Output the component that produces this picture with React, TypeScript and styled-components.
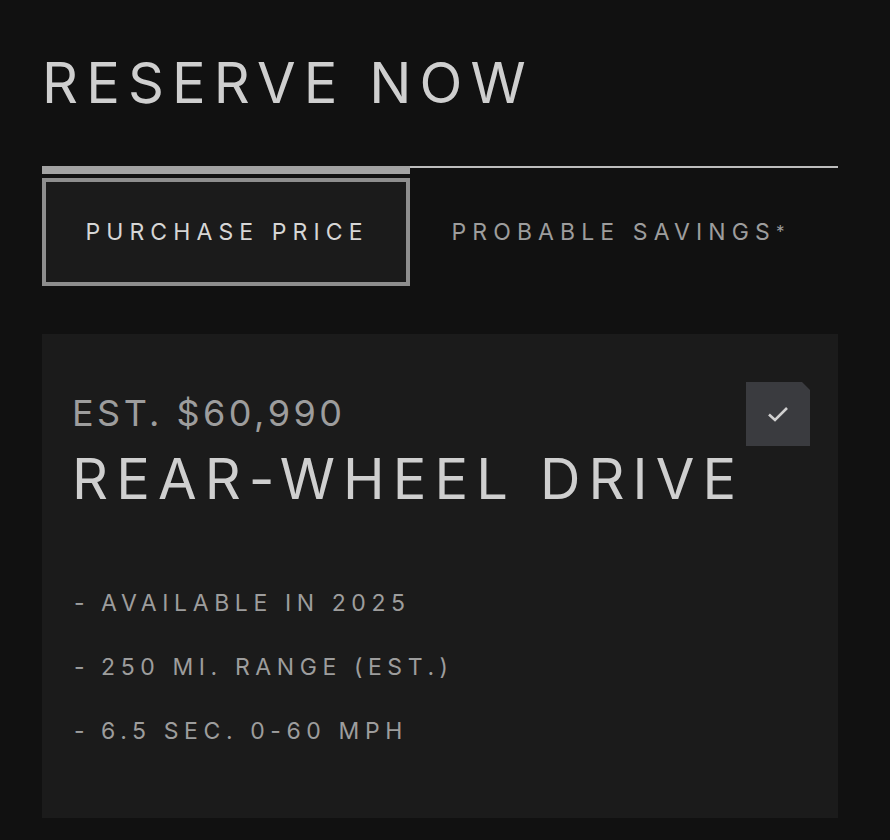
import React, { useState } from "react";
import styled, { createGlobalStyle } from "styled-components";

const GlobalStyle = createGlobalStyle`
  html, body {
    margin: 0;
    padding: 0;
    background: #111111;
  }
  body {
    font-family: Inter, "Liberation Sans", sans-serif;
    -webkit-font-smoothing: antialiased;
  }
`;

const Page = styled.div`
  width: 796px;
  padding: 55px 52px 40px 42px;
`;

const Title = styled.h1`
  margin: 0 0 55px 0;
  font-size: 56px;
  line-height: 56px;
  font-weight: 400;
  letter-spacing: 8.1px;
  color: #cfcfcf;
  white-space: nowrap;
`;

const TabsRow = styled.div`
  display: flex;
  align-items: flex-start;
`;

const Tab = styled.div<{ $grow?: boolean }>`
  display: flex;
  flex-direction: column;
  width: ${(p) => (p.$grow ? "auto" : "368px")};
  flex: ${(p) => (p.$grow ? "1" : "none")};
  cursor: pointer;
`;

const Indicator = styled.div<{ $active?: boolean }>`
  height: ${(p) => (p.$active ? "8px" : "2px")};
  background: ${(p) => (p.$active ? "#a3a3a3" : "#bdbdbd")};
`;

const TabBox = styled.div<{ $active?: boolean }>`
  margin-top: ${(p) => (p.$active ? "4px" : "10px")};
  height: 108px;
  box-sizing: border-box;
  border: 4px solid ${(p) => (p.$active ? "#8e8e8e" : "transparent")};
  background: ${(p) => (p.$active ? "#1b1b1b" : "transparent")};
  display: flex;
  align-items: center;
  justify-content: center;
  padding-left: ${(p) => (p.$active ? "2px" : "0")};
  padding-right: ${(p) => (p.$active ? "0" : "12px")};
  font-size: 23px;
  letter-spacing: 6.1px;
  color: ${(p) => (p.$active ? "#d6d6d6" : "#9d9d9d")};
  white-space: nowrap;
`;

const Star = styled.sup`
  font-size: 17px;
  letter-spacing: 0;
  vertical-align: 5px;
  line-height: 0;
`;

const Card = styled.div`
  margin-top: 48px;
  height: 484px;
  box-sizing: border-box;
  background: #1b1b1b;
  padding: 48px 28px 0 30px;
`;

const CardHead = styled.div`
  display: flex;
  justify-content: space-between;
  align-items: flex-start;
`;

const Price = styled.div`
  margin-top: 9px;
  font-size: 36px;
  line-height: 44px;
  letter-spacing: 3.45px;
  color: #9d9d9d;
  white-space: nowrap;
`;

const Model = styled.div`
  margin-top: 14px;
  font-size: 56px;
  line-height: 60px;
  letter-spacing: 8.1px;
  color: #cfcfcf;
  white-space: nowrap;
`;

const Check = styled.div`
  width: 64px;
  height: 64px;
  flex: none;
  background: #3a3b3f;
  clip-path: polygon(0 0, 56px 0, 64px 8px, 64px 64px, 0 64px);
  display: flex;
  align-items: center;
  justify-content: center;
`;

const Specs = styled.ul`
  list-style: none;
  margin: 80px 0 0 2px;
  padding: 0;
  display: flex;
  flex-direction: column;
  gap: 36px;
`;

const Spec = styled.li`
  font-size: 23px;
  line-height: 28px;
  letter-spacing: 5.6px;
  color: #9d9d9d;
  white-space: nowrap;
`;

const Dash = styled.span`
  letter-spacing: 2px;
  margin-right: 6px;
`;

const specs = ["AVAILABLE IN 2025", "250 MI. RANGE (EST.)", "6.5 SEC. 0-60 MPH"];

export default function App() {
  const [tab, setTab] = useState(0);

  return (
    <>
      <GlobalStyle />
      <Page>
        <Title>RESERVE NOW</Title>
        <TabsRow>
          <Tab onClick={() => setTab(0)}>
            <Indicator $active={tab === 0} />
            <TabBox $active={tab === 0}>PURCHASE PRICE</TabBox>
          </Tab>
          <Tab $grow onClick={() => setTab(1)}>
            <Indicator $active={tab === 1} />
            <TabBox $active={tab === 1}>
              PROBABLE SAVINGS<Star>*</Star>
            </TabBox>
          </Tab>
        </TabsRow>
        <Card>
          <CardHead>
            <div>
              <Price>EST. $60,990</Price>
              <Model>REAR-WHEEL DRIVE</Model>
            </div>
            <Check>
              <svg width="22" height="16" viewBox="0 0 22 16" fill="none">
                <path d="M2 8.5 L8 14 L20 2" stroke="#d0d0d0" strokeWidth="2.6" />
              </svg>
            </Check>
          </CardHead>
          <Specs>
            {specs.map((s) => (
              <Spec key={s}>
                <Dash>- </Dash>
                {s}
              </Spec>
            ))}
          </Specs>
        </Card>
      </Page>
    </>
  );
}
